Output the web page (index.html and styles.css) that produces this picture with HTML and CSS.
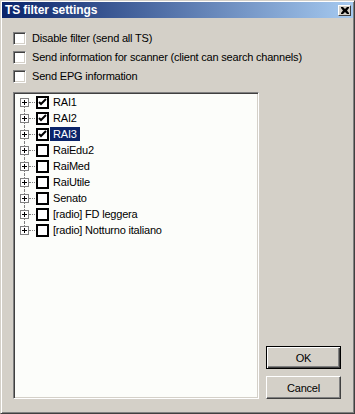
FILE: index.html
```html
<!DOCTYPE html>
<html lang="en">
<head>
    <meta charset="UTF-8">
    <title>TS filter settings</title>
    <link rel="stylesheet" href="styles.css">
</head>
<body>

    <div class="window">
        <div class="titlebar">
            <span class="title">TS filter settings</span>
            <span class="close">
                <svg width="8" height="7" viewBox="0 0 8 7"><path d="M0 0h2l2 2 2-2h2v1l-2 2.5 2 2.5v1h-2l-2-2-2 2h-2v-1l2-2.5-2-2.5z" fill="#000"/></svg>
            </span>
        </div>

        <div class="content">
            <label class="option"><span class="check"></span>Disable filter (send all TS)</label>
            <label class="option"><span class="check"></span>Send information for scanner (client can search channels)</label>
            <label class="option"><span class="check"></span>Send EPG information</label>

            <div class="lower">
                <div class="tree">
                    <ul>
                        <li class="first"><span class="plus"></span><span class="dots"></span><span class="tbox on"></span><span class="label">RAI1</span></li>
                        <li><span class="plus"></span><span class="dots"></span><span class="tbox on"></span><span class="label">RAI2</span></li>
                        <li><span class="plus"></span><span class="dots"></span><span class="tbox on"></span><span class="label selected">RAI3</span></li>
                        <li><span class="plus"></span><span class="dots"></span><span class="tbox"></span><span class="label">RaiEdu2</span></li>
                        <li><span class="plus"></span><span class="dots"></span><span class="tbox"></span><span class="label">RaiMed</span></li>
                        <li><span class="plus"></span><span class="dots"></span><span class="tbox"></span><span class="label">RaiUtile</span></li>
                        <li><span class="plus"></span><span class="dots"></span><span class="tbox"></span><span class="label">Senato</span></li>
                        <li><span class="plus"></span><span class="dots"></span><span class="tbox"></span><span class="label">[radio] FD leggera</span></li>
                        <li class="last"><span class="plus"></span><span class="dots"></span><span class="tbox"></span><span class="label">[radio] Notturno italiano</span></li>
                    </ul>
                </div>
                <div class="buttons">
                    <button class="default">OK</button>
                    <button>Cancel</button>
                </div>
            </div>
        </div>
    </div>

</body>
</html>
```

FILE: styles.css
```css
* {
    box-sizing: border-box;
}
body {
    margin: 0;
    font-family: "Liberation Sans", Arial, sans-serif;
    font-size: 11px;
    letter-spacing: -0.2px;
    color: #000;
}
.window {
    width: 355px;
    height: 414px;
    background: #d4d0c8;
    border-top: 1px solid #d4d0c8;
    border-left: 1px solid #d4d0c8;
    border-right: 1px solid #404040;
    border-bottom: 1px solid #404040;
    box-shadow: inset 1px 1px 0 #fff, inset -1px -1px 0 #808080;
    padding: 1px;
    display: flex;
    flex-direction: column;
}
.titlebar {
    height: 16px;
    background: linear-gradient(to right, #0a246a, #a6caf0);
    display: flex;
    align-items: center;
    padding: 0 2px 0 3px;
}
.title {
    flex: 1;
    color: #fff;
    font-weight: bold;
    font-size: 12px;
    letter-spacing: -0.1px;
}
.close {
    width: 13px;
    height: 11px;
    background: #d4d0c8;
    border-top: 1px solid #fff;
    border-left: 1px solid #fff;
    border-right: 1px solid #404040;
    border-bottom: 1px solid #404040;
    display: flex;
    align-items: center;
    justify-content: center;
}
.content {
    flex: 1;
    display: flex;
    flex-direction: column;
    padding: 11px 12px 13px 11px;
}
.option {
    height: 19px;
    display: flex;
    align-items: flex-start;
    line-height: 19px;
}
.check {
    width: 13px;
    height: 13px;
    margin: 3px 6px 0 0;
    background: #fff;
    border-top: 1px solid #808080;
    border-left: 1px solid #808080;
    border-right: 1px solid #fff;
    border-bottom: 1px solid #fff;
    box-shadow: inset 1px 1px 0 #404040, inset -1px -1px 0 #d4d0c8;
}
.lower {
    flex: 1;
    display: flex;
    gap: 7px;
    margin-top: 6px;
}
.tree {
    width: 246px;
    background: #fcfdfa;
    border-top: 1px solid #808080;
    border-left: 1px solid #808080;
    border-right: 1px solid #fff;
    border-bottom: 1px solid #fff;
    box-shadow: inset 1px 1px 0 #404040, inset -1px -1px 0 #d4d0c8;
    padding: 1px;
}
.tree ul {
    list-style: none;
    margin: 0;
    padding: 0;
}
.tree li {
    position: relative;
    height: 16px;
    display: flex;
    align-items: center;
    padding-left: 5px;
}
.tree li::before {
    content: "";
    position: absolute;
    left: 9px;
    top: 0;
    bottom: 0;
    border-left: 1px dotted #808080;
}
.tree li.first::before {
    top: 8px;
}
.tree li.last::before {
    bottom: 8px;
}
.plus {
    position: relative;
    z-index: 1;
    width: 9px;
    height: 9px;
    border: 1px solid #808080;
    background: #fff linear-gradient(#000, #000) center / 5px 1px no-repeat;
}
.plus::after {
    content: "";
    position: absolute;
    left: 3px;
    top: 1px;
    width: 1px;
    height: 5px;
    background: #000;
}
.dots {
    width: 6px;
    border-top: 1px dotted #808080;
    margin-top: 1px;
}
.tbox {
    width: 13px;
    height: 13px;
    margin-left: 1px;
    border: 2px solid #000;
    background: #fff;
}
.tbox.on {
    background: #fff url("data:image/svg+xml,%3Csvg xmlns='http://www.w3.org/2000/svg' width='9' height='9'%3E%3Cpath d='M1 4l2 2 5-5' fill='none' stroke='%23000' stroke-width='2'/%3E%3C/svg%3E") center no-repeat;
}
.label {
    margin-left: 1px;
    padding: 0 3px;
    height: 14px;
    line-height: 14px;
    white-space: nowrap;
}
.label.selected {
    background: #0a246a;
    color: #fff;
}
.buttons {
    display: flex;
    flex-direction: column;
    justify-content: flex-end;
    gap: 7px;
}
button {
    width: 75px;
    height: 23px;
    font-family: "Liberation Sans", Arial, sans-serif;
    font-size: 11px;
    letter-spacing: -0.2px;
    color: #000;
    background: #d4d0c8;
    border-top: 1px solid #fff;
    border-left: 1px solid #fff;
    border-right: 1px solid #404040;
    border-bottom: 1px solid #404040;
    box-shadow: inset -1px -1px 0 #808080;
    padding: 0;
}
button.default {
    border: 1px solid #000;
    box-shadow: inset 1px 1px 0 #fff, inset -1px -1px 0 #404040, inset -2px -2px 0 #808080;
}
```
